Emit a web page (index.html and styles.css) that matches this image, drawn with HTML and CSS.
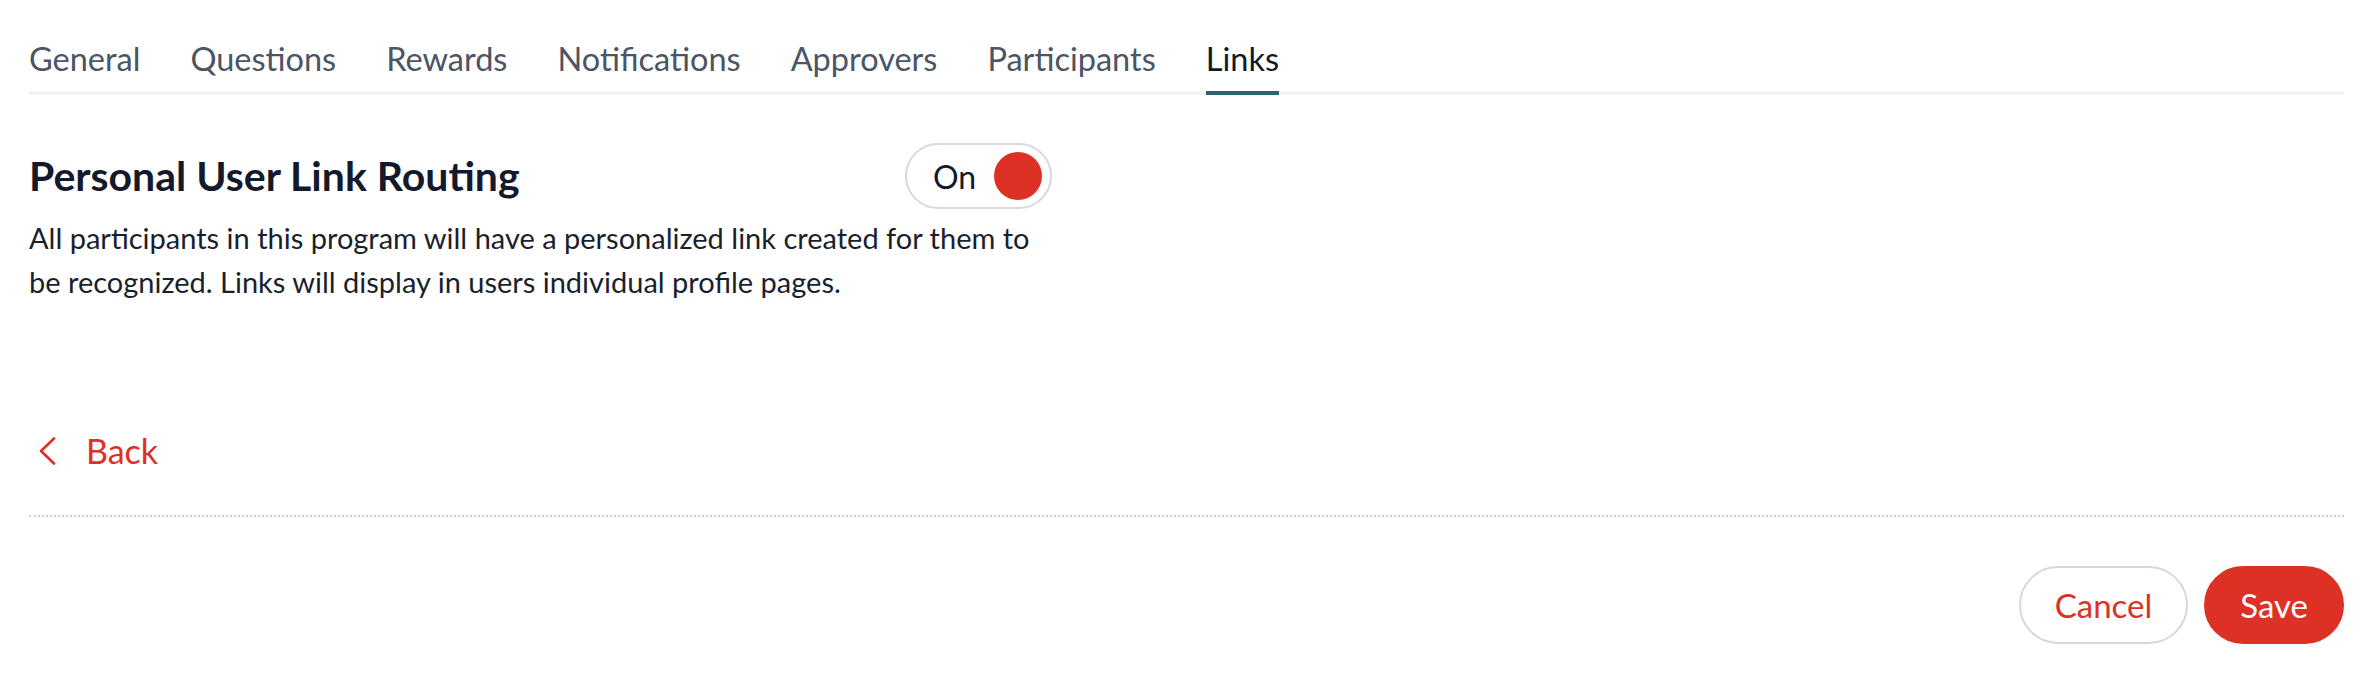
FILE: index.html
```html
<!DOCTYPE html>
<html lang="en">
<head>
<meta charset="utf-8">
<title>Program settings – Links</title>
<link rel="stylesheet" href="styles.css">
</head>
<body>
<div class="page">
  <nav class="tabs">
    <a class="tab">General</a>
    <a class="tab">Questions</a>
    <a class="tab">Rewards</a>
    <a class="tab">Notifications</a>
    <a class="tab">Approvers</a>
    <a class="tab">Participants</a>
    <a class="tab tab-active">Links</a>
  </nav>

  <section class="setting">
    <div class="setting-head">
      <h2 class="setting-title">Personal User Link Routing</h2>
      <button class="toggle" type="button">
        <span class="toggle-label">On</span>
        <span class="toggle-knob"></span>
      </button>
    </div>
    <p class="setting-desc">All participants in this program will have a personalized link created for them to be recognized. Links will display in users individual profile pages.</p>
  </section>

  <a class="back">
    <svg class="back-icon" width="18" height="28" viewBox="0 0 18 28" aria-hidden="true">
      <polyline points="16,1.5 3,14 16,26.5" fill="none" stroke="currentColor" stroke-width="2.6" stroke-linecap="round" stroke-linejoin="round"/>
    </svg>
    <span>Back</span>
  </a>

  <div class="footer">
    <button class="btn btn-outline" type="button">Cancel</button>
    <button class="btn btn-primary" type="button">Save</button>
  </div>
</div>
</body>
</html>
```

FILE: styles.css
```css
* {
  box-sizing: border-box;
}

html, body {
  margin: 0;
  padding: 0;
  background: #ffffff;
}

body {
  font-family: "Lato", "Liberation Sans", sans-serif;
  color: #161b2b;
}

.page {
  padding: 41px 30px 0 29px;
  display: flex;
  flex-direction: column;
}

/* Tabs */
.tabs {
  display: flex;
  gap: 50px;
  border-bottom: 4px solid #f3f4f6;
}

.tab {
  font-size: 32.5px;
  line-height: 36px;
  color: #4b5563;
  padding-bottom: 14px;
  margin-bottom: -4px;
  border-bottom: 4px solid transparent;
  cursor: pointer;
}

.tab-active {
  color: #111827;
  border-bottom-color: #2f6175;
}

/* Setting block */
.setting {
  width: 1023px;
  margin-top: 48px;
}

.setting-head {
  display: flex;
  align-items: center;
  justify-content: space-between;
}

.setting-title {
  margin: 0;
  font-size: 41px;
  line-height: 44px;
  font-weight: 700;
  color: #141a2b;
}

.toggle {
  display: flex;
  align-items: center;
  width: 147px;
  height: 66px;
  padding: 0 8px 0 26px;
  border: 2px solid #d5d8de;
  border-radius: 33px;
  background: #ffffff;
  font-family: inherit;
  cursor: pointer;
}

.toggle-label {
  font-size: 32px;
  color: #141a2b;
}

.toggle-knob {
  width: 48px;
  height: 48px;
  border-radius: 50%;
  background: #dc3124;
  margin-left: auto;
}

.setting-desc {
  margin: 7px 0 0;
  font-size: 29px;
  line-height: 44px;
  color: #1a1f2e;
}

/* Back link */
.back {
  display: flex;
  align-items: center;
  gap: 30px;
  margin-top: 129px;
  padding-left: 9px;
  font-size: 34px;
  line-height: 36px;
  color: #dc3124;
  cursor: pointer;
}

.back-icon {
  display: block;
}

/* Footer */
.footer {
  margin-top: 46px;
  border-top: 2px dotted #cfcfcf;
  padding-top: 49px;
  display: flex;
  justify-content: flex-end;
  gap: 16px;
}

.btn {
  height: 78px;
  padding: 0 34px;
  border-radius: 39px;
  font-family: inherit;
  font-size: 33px;
  cursor: pointer;
}

.btn-outline {
  background: #ffffff;
  border: 2px solid #d5d8de;
  color: #dc3124;
}

.btn-primary {
  background: #dc3124;
  border: 2px solid #dc3124;
  color: #ffffff;
}
```
